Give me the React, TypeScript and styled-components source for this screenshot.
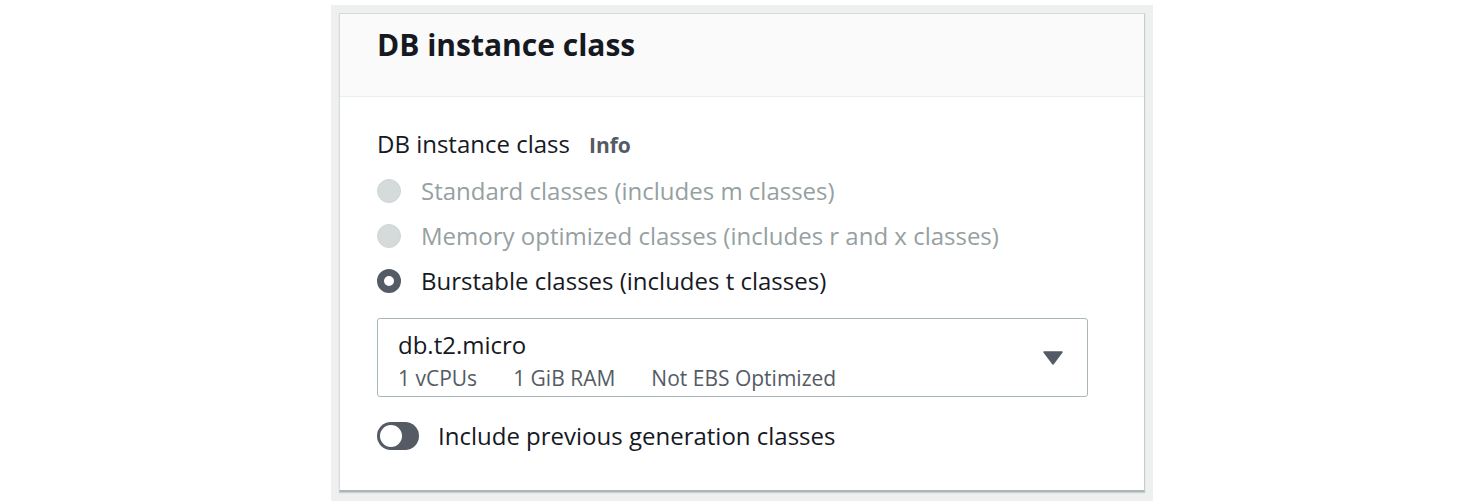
import React from "react";
import styled, { createGlobalStyle } from "styled-components";

const Global = createGlobalStyle`
  html, body { margin: 0; padding: 0; background: #ffffff; }
  body { font-family: "Open Sans", "Noto Sans", Arial, sans-serif; color: #16191f; }
`;

const Page = styled.div`
  display: flex;
  justify-content: center;
  padding-top: 5px;
`;

const Frame = styled.div`
  width: 822px;
  box-sizing: border-box;
  background: #eef0f0;
  padding: 8px 8px 9px 8px;
`;

const Card = styled.section`
  background: #ffffff;
  border: 1px solid #d5dbdb;
  border-right-color: #c4cccc;
  border-bottom: 2px solid #aab7b8;
  box-shadow: 0 1px 1px rgba(0, 28, 36, 0.15);
`;

const Header = styled.header`
  height: 83px;
  box-sizing: border-box;
  background: #fafafa;
  border-bottom: 1px solid #eaeded;
  display: flex;
  align-items: flex-start;
  padding: 11px 0 0 37px;
`;

const Title = styled.h2`
  margin: 0;
  font-size: 30px;
  line-height: 40px;
  font-weight: 700;
  color: #16191f;
`;

const Body = styled.div`
  padding: 31px 37px 40px 37px;
  display: flex;
  flex-direction: column;
`;

const LabelRow = styled.div`
  display: flex;
  align-items: baseline;
  gap: 19px;
  font-size: 24px;
  line-height: 32px;
`;

const Info = styled.span`
  font-size: 21px;
  font-weight: 700;
  color: #545b64;
`;

const RadioList = styled.div`
  display: flex;
  flex-direction: column;
  margin-top: 7px;
`;

const RadioRow = styled.label<{ $disabled?: boolean }>`
  display: flex;
  align-items: center;
  gap: 20px;
  height: 45px;
  font-size: 24px;
  color: ${(p) => (p.$disabled ? "#95a1a1" : "#16191f")};
`;

const RadioDot = styled.span<{ $checked?: boolean; $disabled?: boolean }>`
  width: 24px;
  height: 24px;
  border-radius: 50%;
  box-sizing: border-box;
  flex: none;
  background: ${(p) => (p.$disabled ? "#d5dbdb" : "#ffffff")};
  border: ${(p) =>
    p.$checked ? "7px solid #545b64" : p.$disabled ? "1px solid #cfd6d6" : "2px solid #545b64"};
`;

const Select = styled.div`
  margin-top: 15px;
  width: 711px;
  height: 79px;
  box-sizing: border-box;
  border: 1px solid #aab7b8;
  border-radius: 3px;
  display: flex;
  align-items: center;
  justify-content: space-between;
  padding: 0 24px 0 20px;
`;

const SelectText = styled.div`
  display: flex;
  flex-direction: column;
  padding-top: 8px;
`;

const SelectValue = styled.div`
  font-size: 24px;
  line-height: 32px;
  color: #16191f;
`;

const Tags = styled.div`
  display: flex;
  gap: 36px;
  font-size: 21px;
  line-height: 34px;
  color: #545b64;
`;

const Caret = styled.svg`
  width: 20px;
  height: 14px;
  flex: none;
`;

const ToggleRow = styled.div`
  margin-top: 25px;
  display: flex;
  align-items: center;
  gap: 19px;
  font-size: 24px;
  line-height: 28px;
  color: #16191f;
`;

const Toggle = styled.span`
  width: 42px;
  height: 28px;
  border-radius: 14px;
  background: #545b64;
  box-sizing: border-box;
  padding: 3px;
  display: flex;
  align-items: center;
  flex: none;
`;

const Knob = styled.span`
  width: 22px;
  height: 22px;
  border-radius: 50%;
  background: #ffffff;
`;

export default function App() {
  return (
    <>
      <Global />
      <Page>
        <Frame>
          <Card>
            <Header>
              <Title>DB instance class</Title>
            </Header>
            <Body>
              <LabelRow>
                <span>DB instance class</span>
                <Info>Info</Info>
              </LabelRow>
              <RadioList>
                <RadioRow $disabled>
                  <RadioDot $disabled />
                  Standard classes (includes m classes)
                </RadioRow>
                <RadioRow $disabled>
                  <RadioDot $disabled />
                  Memory optimized classes (includes r and x classes)
                </RadioRow>
                <RadioRow>
                  <RadioDot $checked />
                  Burstable classes (includes t classes)
                </RadioRow>
              </RadioList>
              <Select>
                <SelectText>
                  <SelectValue>db.t2.micro</SelectValue>
                  <Tags>
                    <span>1 vCPUs</span>
                    <span>1 GiB RAM</span>
                    <span>Not EBS Optimized</span>
                  </Tags>
                </SelectText>
                <Caret viewBox="0 0 20 14">
                  <path d="M1 1 H19 L10 13 Z" fill="#545b64" stroke="#545b64" strokeWidth="1.5" strokeLinejoin="round" />
                </Caret>
              </Select>
              <ToggleRow>
                <Toggle>
                  <Knob />
                </Toggle>
                Include previous generation classes
              </ToggleRow>
            </Body>
          </Card>
        </Frame>
      </Page>
    </>
  );
}
